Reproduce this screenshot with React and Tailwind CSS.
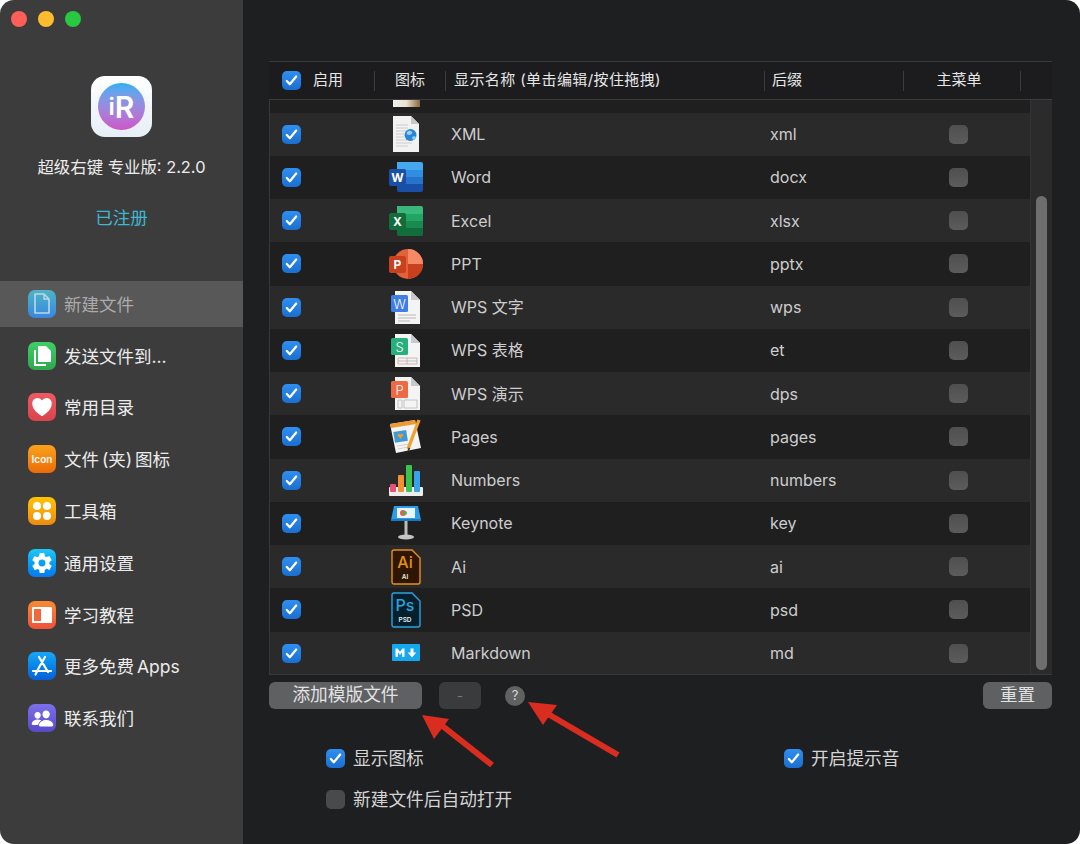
import React from 'react';
import { IoHeart, IoPeople, IoSettingsSharp } from 'react-icons/io5';

const Check = ({ on = true, muted = false }) => (
  <span className={`flex h-[19px] w-[19px] shrink-0 items-center justify-center rounded-[5px] ${on ? 'bg-gradient-to-b from-[#2f8ff0] to-[#1a6fd0]' : muted ? 'bg-gradient-to-b from-[#4f4f4f] to-[#5c5c5c]' : 'bg-[#4a4a4c]'}`}>
    {on && (
      <svg width="15" height="15" viewBox="0 0 16 16" fill="none">
        <path d="M3 8.5l3.2 3.5L13 3.8" stroke="white" strokeWidth="2.4" strokeLinecap="round" strokeLinejoin="round" />
      </svg>
    )}
  </span>
);

// document sheet with a coloured badge, shared by the WPS rows
const WpsIcon = ({ color, letter, lines }) => (
  <svg width="30" height="35" viewBox="0 0 30 35">
    <path d="M4 1h16l9 9v24H4z" fill="#f4f4f4" />
    <path d="M20 1l9 9h-9z" fill="#c9c9c9" />
    <rect x="0" y="5" width="17" height="17" rx="1.5" fill={color} />
    <text x="8.5" y="18.5" textAnchor="middle" fontSize="13" fontWeight="300" fill="white" fontFamily="Inter">{letter}</text>
    {lines === 'text' && <path d="M7 25h18M7 28h18M7 31h12" stroke="#b8b8b8" strokeWidth="1" />}
    {lines === 'grid' && <path d="M7 25h19v6H7zM7 28h19M16 25v6" stroke="#c0a8a8" strokeWidth="0.8" fill="none" />}
    {lines === 'slide' && <path d="M7 24h4v8H7zM13 24h13v8H13z" stroke="#b8b8b8" strokeWidth="0.8" fill="none" />}
  </svg>
);

const OfficeIcon = ({ letter, dark, mid, light, lighter, round }) => (
  <svg width="34" height="30" viewBox="0 0 34 30">
    {round ? (
      <>
        <circle cx="19" cy="15" r="15" fill={mid} />
        <path d="M19 0a15 15 0 0 1 15 15H19z" fill={light} />
        <path d="M19 15h15a15 15 0 0 1-15 15z" fill={dark} />
      </>
    ) : (
      <>
        <path d="M8 0h24a2 2 0 0 1 2 2v6H8z" fill={lighter} />
        <rect x="8" y="8" width="26" height="7" fill={light} />
        <rect x="8" y="15" width="26" height="7" fill={mid} />
        <path d="M8 22h26v6a2 2 0 0 1-2 2H10a2 2 0 0 1-2-2z" fill={dark} />
      </>
    )}
    <rect x="0" y="7" width="17" height="17" rx="2" fill={dark} />
    <text x="8.5" y="20" textAnchor="middle" fontSize="12" fontWeight="700" fill="white" fontFamily="Inter">{letter}</text>
  </svg>
);

const AdobeIcon = ({ border, bg, big, small }) => (
  <svg width="30" height="36" viewBox="0 0 30 36">
    <path d="M3 1h18l8 8v24a2 2 0 0 1-2 2H3a2 2 0 0 1-2-2V3a2 2 0 0 1 2-2z" fill={bg} stroke={border} strokeWidth="1.4" />
    <text x="14" y="19" textAnchor="middle" fontSize="16" fontWeight="500" fill={border} fontFamily="Inter">{big}</text>
    <text x="14" y="30" textAnchor="middle" fontSize="6.5" fontWeight="600" fill="#e8e8e8" fontFamily="Inter">{small}</text>
  </svg>
);

const XmlIcon = () => (
  <svg width="28" height="36" viewBox="0 0 28 36">
    <path d="M1 0h18l8 8v28H1z" fill="#f2f2f2" />
    <path d="M19 0l8 8h-8z" fill="#c8c8c8" />
    <path d="M4 9h12M4 12h12M4 15h10M4 18h8M4 21h8M4 24h14M4 27h16M4 30h12" stroke="#c4c4c4" strokeWidth="0.8" />
    <circle cx="18.5" cy="19" r="6" fill="#2a84d8" />
    <path d="M15 16c2-2 4-1 5 0s-1 3-3 3-3-1-2-3zM20 21c1-1 3-1 4 0l-2 3c-1 0-2-1-2-3z" fill="#8fd0f5" />
  </svg>
);

const PagesIcon = () => (
  <svg width="34" height="36" viewBox="0 0 34 36">
    <path d="M1 5l25-4 6 28-25 5z" fill="#f4f4f4" />
    <path d="M1 5l25-4 1 4L2 9z" fill="#ef9a2c" />
    <rect x="5" y="12" width="13" height="11" transform="rotate(-9 11 17)" fill="#3f9bd8" />
    <path d="M11.5 20l-3-3.5a1.7 1.7 0 0 1 3-1 1.7 1.7 0 0 1 3 .5z" fill="#ef9a2c" />
    <path d="M8 27l12-2M9 30l10-2" stroke="#c8c8c8" strokeWidth="0.8" />
    <path d="M30 1l-11 29" stroke="#eea330" strokeWidth="3.4" />
    <path d="M19.6 28.5l-2 6 3.8-5z" fill="#333" />
  </svg>
);

const NumbersIcon = () => (
  <svg width="34" height="32" viewBox="0 0 34 32">
    <rect x="0" y="23" width="34" height="9" rx="1" fill="#ededed" />
    <rect x="1" y="20" width="6" height="8" rx="1" fill="#e8527a" />
    <rect x="9" y="11" width="6" height="17" rx="1" fill="#f19132" />
    <rect x="17" y="1" width="6" height="27" rx="1" fill="#3cc24d" />
    <rect x="25" y="7" width="6" height="21" rx="1" fill="#36a3ea" />
  </svg>
);

const KeynoteIcon = () => (
  <svg width="32" height="36" viewBox="0 0 32 36">
    <path d="M4 1h24l3 14H1z" fill="#2a9ce8" />
    <rect x="7" y="3" width="18" height="10" fill="#e8f3fb" />
    <circle cx="13" cy="8" r="3" fill="#e85a4a" />
    <circle cx="15" cy="8" r="2" fill="#4cb050" />
    <rect x="1" y="14" width="30" height="2" fill="#1a78c0" />
    <rect x="14.5" y="16" width="3" height="15" fill="#bcbcbc" />
    <ellipse cx="16" cy="32" rx="8" ry="2.6" fill="#c4c4c4" />
  </svg>
);

const MarkdownIcon = () => (
  <svg width="28" height="18" viewBox="0 0 28 18">
    <rect width="28" height="17" rx="1" fill="#16a8ee" />
    <path d="M3.5 13V4.5h2l2.5 3.3 2.5-3.3h2V13h-2.4V8.2L8 11 5.9 8.2V13zM18.5 4.5h3v4h2.8l-4.3 5-4.3-5h2.8z" fill="white" />
  </svg>
);

const rows = [
  { name: 'XML', ext: 'xml', icon: <XmlIcon /> },
  { name: 'Word', ext: 'docx', icon: <OfficeIcon letter="W" dark="#1a4fa8" mid="#2474cc" light="#2f8ee0" lighter="#45a8ee" /> },
  { name: 'Excel', ext: 'xlsx', icon: <OfficeIcon letter="X" dark="#116d3c" mid="#1a8a50" light="#20a565" lighter="#3ab87c" /> },
  { name: 'PPT', ext: 'pptx', icon: <OfficeIcon letter="P" round dark="#c8401e" mid="#e2603a" light="#f58a66" /> },
  { name: 'WPS 文字', ext: 'wps', icon: <WpsIcon color="#3f7de8" letter="W" lines="text" /> },
  { name: 'WPS 表格', ext: 'et', icon: <WpsIcon color="#25b07c" letter="S" lines="grid" /> },
  { name: 'WPS 演示', ext: 'dps', icon: <WpsIcon color="#ee6a45" letter="P" lines="slide" /> },
  { name: 'Pages', ext: 'pages', icon: <PagesIcon /> },
  { name: 'Numbers', ext: 'numbers', icon: <NumbersIcon /> },
  { name: 'Keynote', ext: 'key', icon: <KeynoteIcon /> },
  { name: 'Ai', ext: 'ai', icon: <AdobeIcon border="#e8901c" bg="#2e1600" big="Ai" small="AI" /> },
  { name: 'PSD', ext: 'psd', icon: <AdobeIcon border="#2fa3dc" bg="#04202e" big="Ps" small="PSD" /> },
  { name: 'Markdown', ext: 'md', icon: <MarkdownIcon /> },
];

const nav = [
  {
    label: '新建文件', bg: 'from-[#4fb4c4] to-[#3a86e0]', active: true,
    icon: <svg width="18" height="21" viewBox="0 0 18 21" fill="none"><path d="M2 1h9l5 5v14H2z" stroke="#bcd8e8" strokeWidth="1.6" strokeLinejoin="round" /><path d="M11 1v5h5" stroke="#bcd8e8" strokeWidth="1.4" /></svg>,
  },
  {
    label: '发送文件到...', bg: 'from-[#3fcf66] to-[#2fa84f]',
    icon: <svg width="20" height="22" viewBox="0 0 20 22" fill="white"><path d="M6 1h8l5 5v11H6z" /><path d="M2 5h2v14h10v2H2z" /></svg>,
  },
  { label: '常用目录', bg: 'from-[#ef5a62] to-[#d8434e]', icon: <IoHeart size={24} color="white" /> },
  { label: '文件 (夹) 图标', bg: 'from-[#f9a21a] to-[#ec6a08]', icon: <span className="text-[10px] font-semibold text-white">Icon</span> },
  {
    label: '工具箱', bg: 'from-[#ffc400] to-[#ee8a10]',
    icon: <svg width="20" height="20" viewBox="0 0 20 20" fill="white"><rect x="1" y="1" width="8" height="8" rx="4" /><rect x="11" y="1" width="8" height="8" rx="4" /><rect x="1" y="11" width="8" height="8" rx="4" /><rect x="11" y="11" width="8" height="8" rx="4" /></svg>,
  },
  { label: '通用设置', bg: 'from-[#1fc8f8] to-[#0a78f0]', icon: <IoSettingsSharp size={22} color="white" /> },
  {
    label: '学习教程', bg: 'from-[#f98a30] to-[#f0503a]',
    icon: <svg width="20" height="18" viewBox="0 0 20 18"><rect x="0" y="1" width="20" height="16" rx="1" fill="white" /><rect x="2" y="3" width="7" height="12" fill="#f2683a" /></svg>,
  },
  {
    label: '更多免费 Apps', bg: 'from-[#18a8f8] to-[#0a60d8]',
    icon: <svg width="22" height="22" viewBox="0 0 22 22" fill="none" stroke="white" strokeWidth="2.2" strokeLinecap="round"><path d="M14 2L6 16M8 2l9 15M2 16h18M4.5 19.5l1.5-3" /></svg>,
  },
  { label: '联系我们', bg: 'from-[#7c70ec] to-[#5a48c8]', icon: <IoPeople size={23} color="white" /> },
];

function Sidebar() {
  return (
    <aside className="flex h-full w-[243px] shrink-0 flex-col bg-[#3c3c3c]">
      <div className="flex gap-[11px] pl-[11px] pt-[11px]">
        <span className="h-4 w-4 rounded-full bg-[#fe5f57]" />
        <span className="h-4 w-4 rounded-full bg-[#febc2e]" />
        <span className="h-4 w-4 rounded-full bg-[#28c840]" />
      </div>
      <div className="mt-[49px] flex flex-col items-center">
        <div className="flex h-[61px] w-[61px] items-center justify-center rounded-[14px] bg-gradient-to-b from-white to-[#e6eef6]">
          <div className="flex h-[47px] w-[47px] items-center justify-center rounded-full bg-gradient-to-b from-[#1cb0f4] to-[#cc55c8] text-[30px] font-semibold leading-none text-white">
            <span className="text-[24px]">i</span>R
          </div>
        </div>
        <div className="mt-[18px] text-[16.4px] leading-6 text-[#ececec]">超级右键 专业版: 2.2.0</div>
        <div className="mt-[25px] text-[17.5px] leading-7 text-[#3fb8cf]">已注册</div>
      </div>
      <nav className="mt-[46px] flex flex-col">
        {nav.map(item => (
          <div key={item.label} className="flex h-[51.8px] items-center">
            <div className={`flex h-[46px] w-full items-center gap-2 pl-[28px] ${item.active ? 'bg-[#585858] text-[#ababab]' : 'text-[#ececec]'}`}>
              <span className={`flex h-[28px] w-[28px] items-center justify-center rounded-[7px] bg-gradient-to-b ${item.bg}`}>
                {item.icon}
              </span>
              <span className="pt-[2px] text-[17.5px] [word-spacing:-2px]">{item.label}</span>
            </div>
          </div>
        ))}
      </nav>
    </aside>
  );
}

function TemplateTable() {
  return (
    <div className="border-t border-[#3a3a3c]">
      {/* column header */}
      <div className="flex h-[38px] items-center border-b border-[#3c3c3e] bg-[#1c1c1e] text-[15px] text-[#e6e6e6]">
        <div className="flex w-[105px] items-center pl-[13px]">
          <Check />
          <span className="ml-3">启用</span>
        </div>
        <div className="h-5 w-px bg-[#3c3c3e]" />
        <div className="w-[70px] text-center">图标</div>
        <div className="h-5 w-px bg-[#3c3c3e]" />
        <div className="w-[318px] pl-[8px] tracking-[0.4px]">显示名称 (单击编辑/按住拖拽)</div>
        <div className="h-5 w-px bg-[#3c3c3e]" />
        <div className="w-[138px] pl-[7px]">后缀</div>
        <div className="h-5 w-px bg-[#3c3c3e]" />
        <div className="w-[116px] pr-[6px] text-center">主菜单</div>
        <div className="h-5 w-px bg-[#3c3c3e]" />
      </div>

      <div className="flex h-[575px] border-b border-l border-[#38383a]">
        <div className="min-w-0 flex-1 overflow-hidden">
          {/* row scrolled mostly out of view */}
          <div className="h-[12.5px] bg-[#1f1f20] pl-[123px]">
            <span className="block h-[7px] w-[27px] bg-gradient-to-r from-[#f0f0f0] via-[#e8e0d0] to-[#8a6a3c]" />
          </div>
          {rows.map((row, i) => (
            <div key={row.name} className={`flex h-[43.25px] items-center text-[16px] text-[#cdcdcd] ${i % 2 === 0 ? 'bg-[#2a2a2b]' : 'bg-[#1f1f20]'}`}>
              <div className="w-[106px] pl-[12px]">
                <Check />
              </div>
              <div className="flex w-[60px] justify-center">{row.icon}</div>
              <div className="w-[334px] pl-[15px]">{row.name}</div>
              <div className="w-[179px]">{row.ext}</div>
              <Check on={false} muted />
            </div>
          ))}
        </div>
        <div className="w-[22px] shrink-0 border-l border-[#333335] bg-[#2b2b2c] pl-[5px] pt-[96px]">
          <div className="h-[474px] w-[11px] rounded-full bg-[#6e6e6e]" />
        </div>
      </div>
    </div>
  );
}

function Main() {
  return (
    <main className="flex h-full min-w-0 flex-1 flex-col bg-[#1e1f21] pl-[26px] pr-[28px] pt-[61px]">
      <TemplateTable />
      <div className="mt-[7px] flex items-center">
        <button className="h-[27px] w-[153px] rounded-[6px] bg-[#5e6062] pb-[2px] text-[17.7px] leading-none text-[#e2e2e2]">添加模版文件</button>
        <button className="ml-[17px] h-[27px] w-[42px] rounded-[6px] bg-[#3a3b3d] text-[14px] leading-none text-[#77787a]">-</button>
        <span className="ml-[24px] flex h-5 w-5 items-center justify-center rounded-full bg-[#606163] text-[13px] text-[#d8d8d8]">?</span>
        <button className="ml-auto h-[27px] w-[69px] rounded-[6px] bg-[#5e6062] pb-[2px] text-[17.5px] leading-none text-[#e2e2e2]">重置</button>
      </div>
      <div className="mt-[40px] grid grid-cols-[458px_1fr] gap-y-[22px] pl-[57px] text-[17.7px] leading-[19px] text-[#d4d4d4]">
        <label className="flex items-center gap-2"><Check />显示图标</label>
        <label className="flex items-center gap-2"><Check />开启提示音</label>
        <label className="flex items-center gap-2"><Check on={false} />新建文件后自动打开</label>
      </div>
    </main>
  );
}

export default function App() {
  return (
    <div className="relative h-[844px] w-[1080px] overflow-hidden bg-white font-['Inter','Noto_Sans_CJK_SC',sans-serif]">
      <div className="flex h-full w-full overflow-hidden rounded-[14px]">
        <Sidebar />
        <Main />
      </div>
      {/* red annotation arrows drawn over the screenshot */}
      <svg className="pointer-events-none absolute left-0 top-0" width="1080" height="844" viewBox="0 0 1080 844">
        <path d="M492 765L440 724" stroke="#d92d20" strokeWidth="6" />
        <path d="M422 715L449 719L434 739z" fill="#d92d20" />
        <path d="M618 755L548 714" stroke="#d92d20" strokeWidth="6" />
        <path d="M528 702L557 705L543 725z" fill="#d92d20" />
      </svg>
    </div>
  );
}
